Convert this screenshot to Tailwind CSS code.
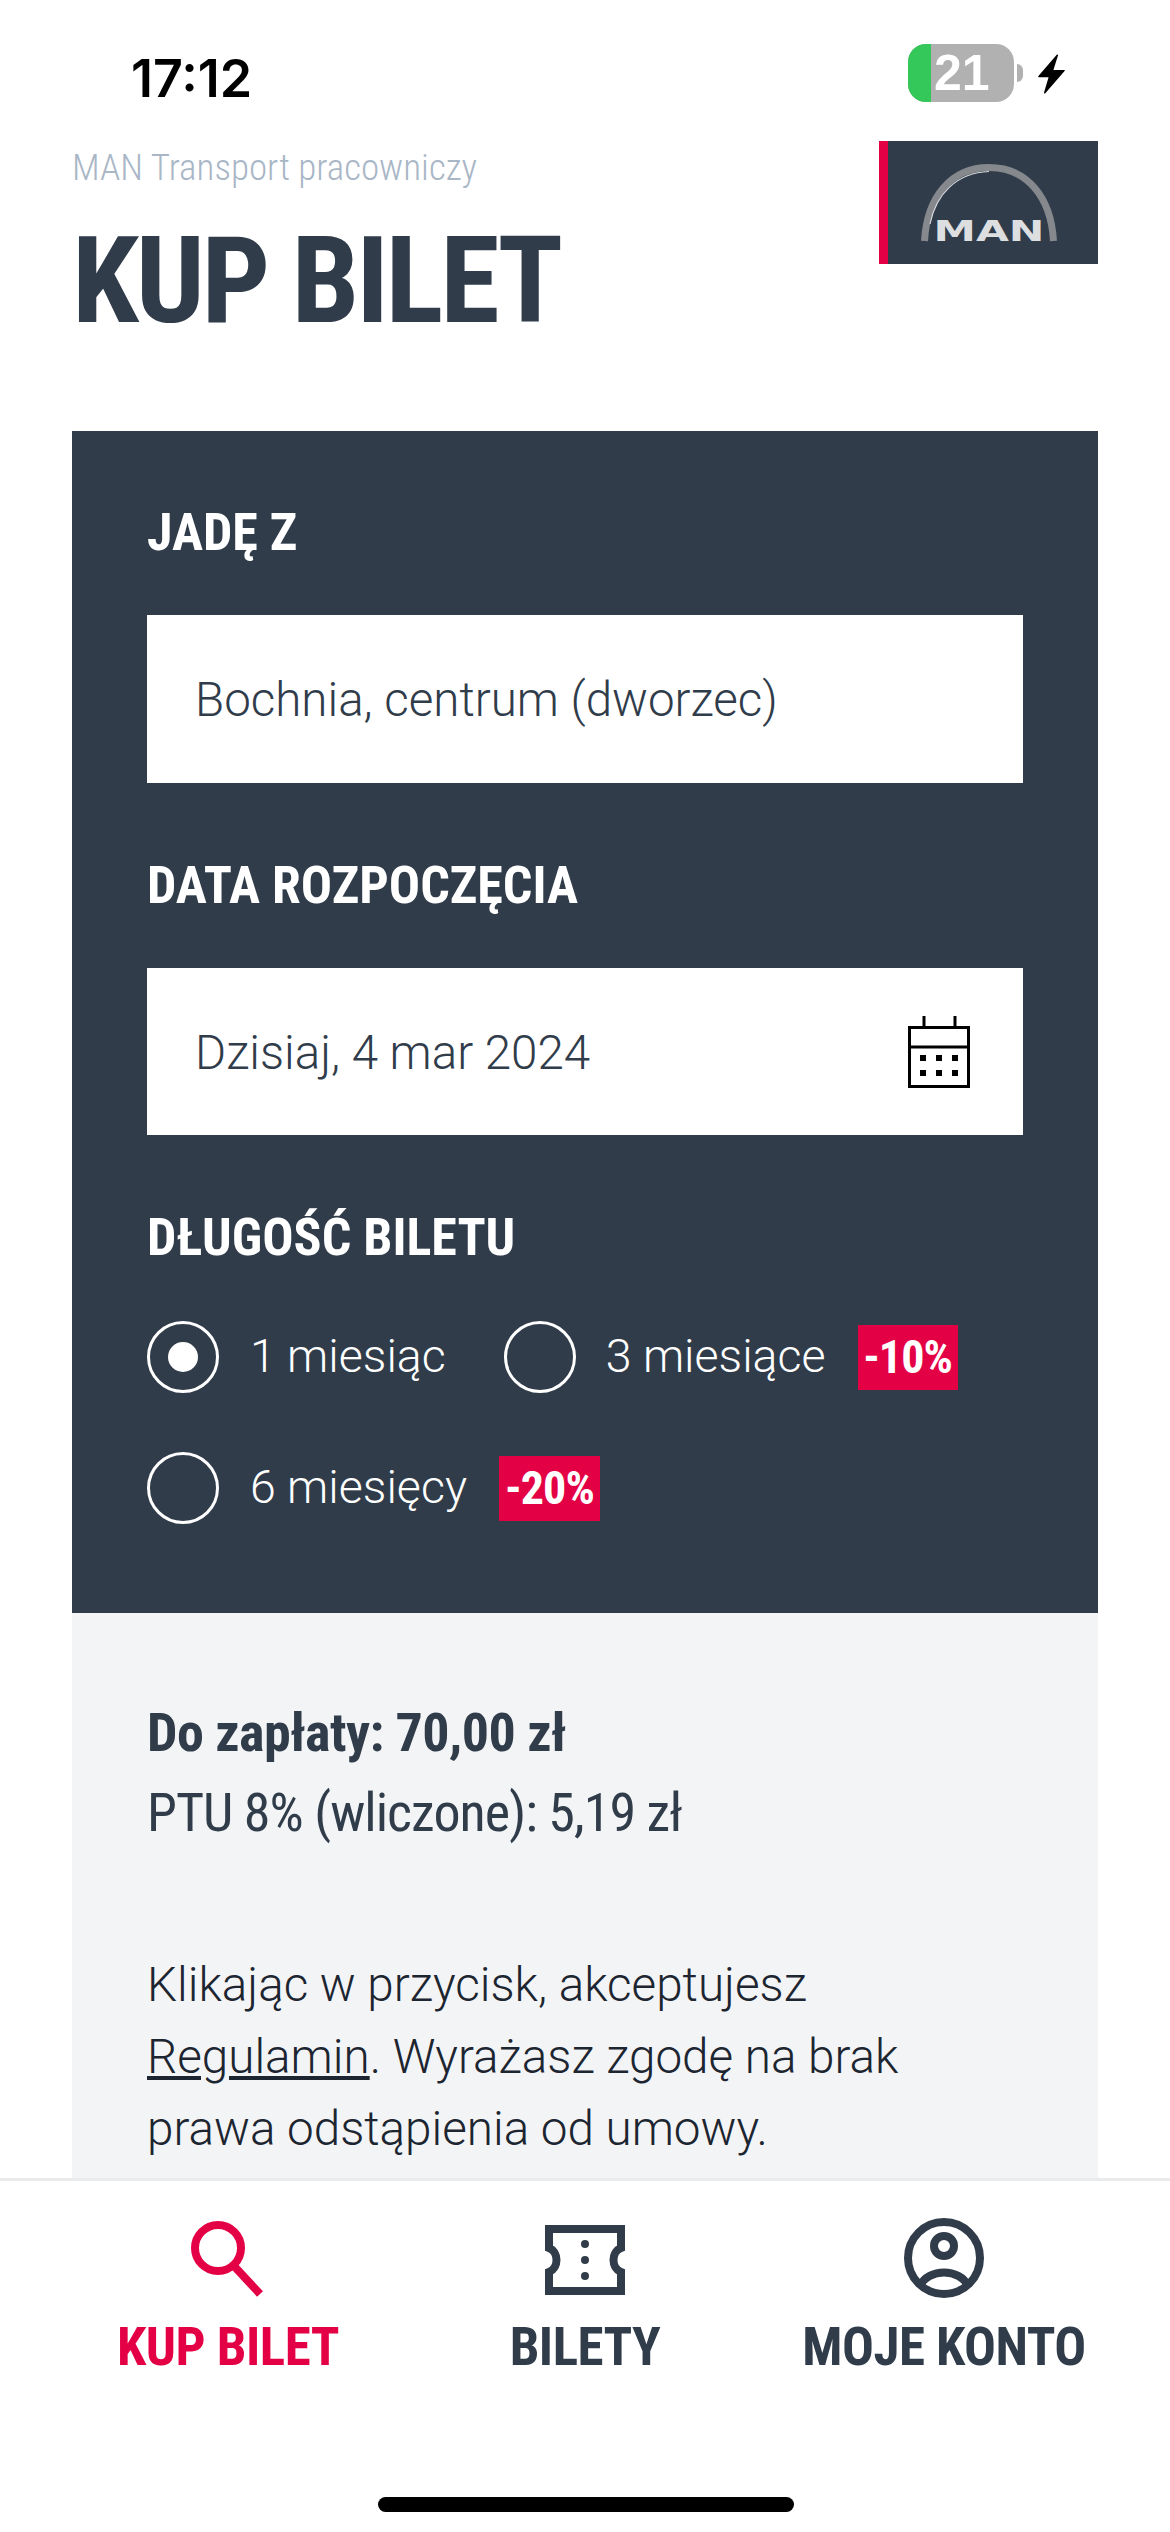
<!DOCTYPE html>
<html lang="pl">
<head>
<meta charset="utf-8">
<script src="https://cdn.jsdelivr.net/npm/@tailwindcss/browser@4"></script>
</head>
<body class="m-0 bg-white">
<div class="relative flex flex-col w-[1170px] h-[2532px] overflow-hidden bg-white font-['Roboto',sans-serif]">
  <main class="flex-1 min-h-0 overflow-hidden">
    <!-- status bar -->
    <div class="flex items-start justify-between h-[141px] pl-[131px] pr-[105px] pt-[44px]">
      <span class="mt-[3px] text-[52px] leading-[64px] font-semibold text-black font-['Inter',sans-serif]">17:12</span>
      <div class="flex items-start">
        <div class="relative flex w-[106px] h-[58px] rounded-[18px] overflow-hidden bg-[#b1b1b1]">
          <div class="w-[23px] h-full bg-[#34c759]"></div>
          <span class="absolute left-[26px] top-0 text-[50px] leading-[58px] font-bold text-white font-['Liberation_Sans',sans-serif]">21</span>
        </div>
        <div class="w-[6px] h-[18px] mt-[20px] ml-[3px] rounded-r-full bg-[#b1b1b1]"></div>
        <svg class="ml-[15px] mt-[10px]" width="27" height="41" viewBox="0 0 28 42" fill="#000"><path d="M20 1 L1 23 L12 23 L7 40 L27 17 L15 17 Z" stroke="#000" stroke-width="1.5" stroke-linejoin="round"/></svg>
      </div>
    </div>
    <!-- header -->
    <div class="flex justify-between px-[72px] h-[290px]">
      <div>
        <p class="pt-[7px] text-[37px] leading-[40px] font-light font-stretch-condensed text-[#a9b6c6]">MAN Transport pracowniczy</p>
        <h1 class="mt-[28px] text-[121px] leading-[130px] font-bold font-stretch-condensed tracking-[-0.027em] text-[#303c4a]">KUP BILET</h1>
      </div>
      <div class="flex items-center justify-center w-[219px] h-[123px] border-l-[9px] border-[#e40045] bg-[#303c4a]">
        <svg class="mr-[9px]" width="136" height="78" viewBox="0 0 136 78">
          <path d="M3.5 77 C6 33 30 3.5 68 3.5 C106 3.5 130 33 132.5 77" fill="none" stroke="#85888c" stroke-width="7"/>
          <path d="M9 60 C15 30 36 8.5 68 7.5" fill="none" stroke="#d5d7d9" stroke-width="1.2"/>
          <text x="68" y="77" text-anchor="middle" textLength="111" lengthAdjust="spacingAndGlyphs" font-family="DejaVu Sans" font-weight="700" font-size="29" fill="#dcdee0" stroke="#303c4a" stroke-width="0.6" paint-order="stroke">MAN</text>
        </svg>
      </div>
    </div>
    <!-- form -->
    <section class="mx-[72px] px-[75px] pt-[69px] pb-[89px] bg-[#303c4a] text-white">
      <h2 class="text-[52px] leading-[66px] font-bold font-stretch-condensed">JADĘ Z</h2>
      <div class="flex items-center h-[168px] mt-[49px] pl-[48px] pt-[4px] bg-white text-[#303c4a] text-[47.5px] font-light">Bochnia, centrum (dworzec)</div>
      <h2 class="mt-[70px] text-[52px] leading-[66px] font-bold font-stretch-condensed">DATA ROZPOCZĘCIA</h2>
      <div class="flex items-center justify-between h-[167px] mt-[49px] pl-[48px] pr-[53px] bg-white text-[#303c4a] text-[47.5px] font-light">
        <span class="pt-[4px]">Dzisiaj, 4 mar 2024</span>
        <svg width="62" height="72" viewBox="0 0 62 72" fill="none" stroke="#000" stroke-width="3"><path d="M1.5 11.5 H60.5 V70.5 H1.5 Z M1.5 31 H60.5 M16 0 V11 M47 0 V11"/><g fill="#000" stroke="none"><rect x="12" y="39" width="6" height="6"/><rect x="28" y="39" width="6" height="6"/><rect x="44" y="39" width="6" height="6"/><rect x="12" y="54" width="6" height="6"/><rect x="28" y="54" width="6" height="6"/><rect x="44" y="54" width="6" height="6"/></g></svg>
      </div>
      <h2 class="mt-[70px] text-[52px] leading-[66px] font-bold font-stretch-condensed">DŁUGOŚĆ BILETU</h2>
      <div class="flex items-center h-[72px] mt-[50px] text-[46.5px] font-light">
        <span class="flex items-center justify-center w-[72px] h-[72px] rounded-full border-[3px] border-white"><span class="w-[30px] h-[30px] rounded-full bg-white"></span></span>
        <span class="ml-[31px]">1 miesiąc</span>
        <span class="ml-[58px] w-[72px] h-[72px] rounded-full border-[3px] border-white"></span>
        <span class="ml-[30px]">3 miesiące</span>
        <span class="ml-[32px] flex items-center justify-center w-[100px] h-[65px] bg-[#e40045] text-[46px] font-bold font-stretch-condensed tracking-[-0.02em]">-10%</span>
      </div>
      <div class="flex items-center h-[72px] mt-[59px] text-[46.5px] font-light">
        <span class="w-[72px] h-[72px] rounded-full border-[3px] border-white"></span>
        <span class="ml-[31px]">6 miesięcy</span>
        <span class="ml-[32px] flex items-center justify-center w-[101px] h-[65px] bg-[#e40045] text-[46px] font-bold font-stretch-condensed tracking-[-0.02em]">-20%</span>
      </div>
    </section>
    <!-- summary -->
    <section class="mx-[72px] px-[75px] pt-[84px] pb-[100px] bg-[#f3f4f6] text-[#303c4a]">
      <p class="text-[54px] leading-[72px] font-bold font-stretch-condensed tracking-[-0.01em]">Do zapłaty: 70,00 zł</p>
      <p class="mt-[8px] text-[54px] leading-[72px] font-stretch-condensed tracking-[-0.018em]">PTU 8% (wliczone): 5,19 zł</p>
      <p class="mt-[100px] text-[47.6px] leading-[72px] font-light text-[#1c2530]">Klikając w przycisk, akceptujesz <span class="underline">Regulamin</span>. Wyrażasz zgodę na brak prawa odstąpienia od umowy.</p>
    </section>
  </main>
  <!-- bottom nav -->
  <nav class="relative grid grid-cols-[452px_266px_452px] h-[354px] shrink-0 border-t-[3px] border-[#e9ebed] bg-white font-bold font-stretch-condensed tracking-[-0.01em] text-[53px] leading-[66px]">
    <a class="flex flex-col items-center pt-[35px] text-[#e40045]">
      <svg class="h-[84px]" width="80" height="84" viewBox="0 0 80 84" fill="none" stroke="#e40045" stroke-width="8"><circle cx="32" cy="32" r="23"/><path d="M48 50 L74 78"/></svg>
      <span class="mt-[14px] ml-[4px]">KUP BILET</span>
    </a>
    <a class="flex flex-col items-center pt-[35px] text-[#303c4a]">
      <svg class="h-[84px]" width="80" height="84" viewBox="0 0 80 84" fill="none" stroke="#303c4a" stroke-width="8"><path d="M4 13 H76 V32 C66 36 66 52 76 56 V75 H4 V56 C14 52 14 36 4 32 Z"/><g fill="#303c4a" stroke="none"><circle cx="40" cy="28" r="4"/><circle cx="40" cy="44" r="4"/><circle cx="40" cy="60" r="4"/></g></svg>
      <span class="mt-[14px]">BILETY</span>
    </a>
    <a class="flex flex-col items-center pt-[35px] text-[#303c4a]">
      <svg class="h-[84px]" width="84" height="84" viewBox="0 0 84 84" fill="none" stroke="#303c4a" stroke-width="8"><circle cx="42" cy="42" r="36"/><circle cx="42" cy="30" r="10"/><path d="M18 70 C26 52 58 52 66 70"/></svg>
      <span class="mt-[14px]">MOJE KONTO</span>
    </a>
    <div class="absolute left-[378px] bottom-[20px] w-[416px] h-[15px] rounded-full bg-black"></div>
  </nav>
</div>
</body>
</html>
